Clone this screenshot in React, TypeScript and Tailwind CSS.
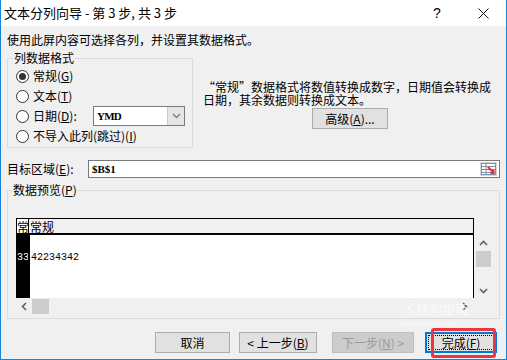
import React from "react";

const cjk = "font-['Noto_Sans_CJK_SC','Noto_Sans',sans-serif]";

function Radio({ checked, children }: { checked?: boolean; children: React.ReactNode }) {
  return (
    <div className="flex items-center gap-[4px]">
      <span className="w-[13px] h-[13px] rounded-full border border-[#333333] bg-white flex items-center justify-center shrink-0">
        {checked && <span className="w-[7px] h-[7px] rounded-full bg-[#333333]" />}
      </span>
      <span className="leading-[20px] whitespace-nowrap">{children}</span>
    </div>
  );
}

function Chevron({ dir }: { dir: "up" | "down" | "left" | "right" }) {
  const pts = {
    up: "1,6 4.5,2.5 8,6",
    down: "1,3 4.5,6.5 8,3",
    left: "6,1 2.5,4.5 6,8",
    right: "3,1 6.5,4.5 3,8",
  }[dir];
  return (
    <svg width="9" height="9" viewBox="0 0 9 9">
      <polyline points={pts} fill="none" stroke="#606060" strokeWidth="1.6" />
    </svg>
  );
}

function Btn({ children, w, kind }: { children: React.ReactNode; w: string; kind?: "disabled" | "default" }) {
  if (kind === "default") {
    return (
      <div className={`${w} h-[21px] border-2 border-[#0078d7] bg-[#e1e1e1] p-[1px] flex`}>
        <div className="flex-1 border border-dotted border-black flex items-center justify-center leading-none">{children}</div>
      </div>
    );
  }
  return (
    <div
      className={`${w} h-[21px] border flex items-center justify-center leading-none ${
        kind === "disabled" ? "border-[#bfbfbf] bg-[#cccccc] text-[#9a9a9a]" : "border-[#adadad] bg-[#e1e1e1] text-black"
      }`}
    >
      {children}
    </div>
  );
}

export default function App() {
  return (
    <div className={`relative w-[507px] h-[360px] border-x border-b border-[#1883d7] bg-[#f0f0f0] text-[12px] text-black flex flex-col ${cjk}`}>
      {/* title bar */}
      <div className="h-[26px] bg-white flex items-center shrink-0">
        <span className="pl-[3px] text-[13px] flex-1 whitespace-nowrap">文本分列向导 - 第 3 步, 共 3 步</span>
        <div className="w-[46px] h-full flex items-center justify-center text-[14px] font-['Liberation_Sans',sans-serif]">?</div>
        <div className="w-[46px] h-full flex items-center justify-center">
          <svg width="11" height="11" viewBox="0 0 11 11">
            <path d="M0.5 0.5 L10.5 10.5 M10.5 0.5 L0.5 10.5" stroke="#111" strokeWidth="1" />
          </svg>
        </div>
      </div>

      <div className="flex flex-col px-[6px]">
        <div className="mt-[6px] h-[16px] leading-[16px]">使用此屏内容可选择各列，并设置其数据格式。</div>

        {/* format group + description */}
        <div className="flex mt-[10px]">
          <div className="relative w-[186px] h-[90px] border border-[#dcdcdc] pl-[8px] pr-[7px] pt-[7px]">
            <span className="absolute left-[5px] -top-[9px] bg-[#f0f0f0] px-[1px] leading-[16px]">列数据格式</span>
            <div className="flex flex-col">
              <div className="h-[20px] flex items-center"><Radio checked>常规(<u>G</u>)</Radio></div>
              <div className="h-[20px] flex items-center"><Radio>文本(<u>T</u>)</Radio></div>
              <div className="h-[20px] flex items-center justify-between">
                <Radio>日期(<u>D</u>):</Radio>
                <div className="w-[92px] h-[20px] border border-[#7a7a7a] bg-white flex">
                  <span className="flex-1 pl-[3px] leading-[18px] text-[11px] font-bold tracking-[-0.8px] font-['Liberation_Serif',serif]">YMD</span>
                  <span className="w-[17px] bg-[#e5e5e5] border-l border-[#c8c8c8] flex items-center justify-center">
                    <svg width="9" height="6" viewBox="0 0 9 6">
                      <polyline points="1,1 4.5,4.5 8,1" fill="none" stroke="#6d6d6d" strokeWidth="1.1" />
                    </svg>
                  </span>
                </div>
              </div>
              <div className="h-[20px] flex items-center"><Radio>不导入此列(跳过)(<u>I</u>)</Radio></div>
            </div>
          </div>

          <div className="ml-[10px] flex flex-col">
            <div className="mt-[22px] leading-[13px] whitespace-nowrap">
              “常规”数据格式将数值转换成数字，日期值会转换成
              <br />
              日期，其余数据则转换成文本。
            </div>
            <div className="mt-[2px] ml-[109px]">
              <Btn w="w-[76px]">高级(<u>A</u>)...</Btn>
            </div>
          </div>
        </div>

        {/* destination */}
        <div className="flex items-center mt-[12px] h-[18px]">
          <span className="w-[81px] whitespace-nowrap">目标区域(<u>E</u>):</span>
          <div className="w-[412px] h-[18px] border border-[#7a7a7a] bg-white flex items-center">
            <span className="flex-1 pl-[3px] font-bold text-[11px] font-['Liberation_Serif',serif]">$B$1</span>
            <span className="w-[17px] h-[14px] mr-[2px] bg-[#d6d6d6] flex items-center justify-center">
              <svg width="15" height="12" viewBox="0 0 15 12">
                <rect x="0.5" y="0.5" width="14" height="11" fill="#ffffff" stroke="#7b8fa8" />
                <path d="M0.5 3.5 H14.5 M0.5 6.5 H14.5 M0.5 9.5 H14.5 M5 0.5 V11.5" stroke="#7b8fa8" strokeWidth="1" />
                <path d="M7 4 L12 9 M9.5 10 L12.5 10 L12.5 7" stroke="#e0303a" strokeWidth="2" fill="none" />
              </svg>
            </span>
          </div>
        </div>

        {/* preview group */}
        <div className="relative mt-[12px] w-[493px] h-[129px] border border-[#dcdcdc] pl-[8px] pt-[27px]">
          <span className="absolute left-[4px] -top-[9px] bg-[#f0f0f0] px-[1px] leading-[16px]">数据预览(<u>P</u>)</span>
          <div className="flex">
            <div className="flex flex-col w-[458px]">
              <div className="h-[80px] border-t border-x border-black bg-white flex flex-col overflow-hidden">
                <div className="h-[16px] bg-[#f0f0f0] border-b-2 border-black flex leading-[16px] shrink-0">
                  <div className="w-[12px] border-r border-black overflow-hidden whitespace-nowrap bg-white">常</div>
                  <div className="pl-[1px] whitespace-nowrap">常规</div>
                </div>
                <div className="flex flex-1">
                  <div className="w-[12px] bg-black text-white border-r border-black overflow-hidden font-['Liberation_Mono',monospace] text-[10px] pt-[17px] leading-[12px] whitespace-nowrap">
                    33
                  </div>
                  <div className="w-[1px] bg-black" />
                  <div className="pl-[1px] font-['Liberation_Mono',monospace] text-[10px] pt-[17px] leading-[12px]">42234342</div>
                </div>
              </div>
              <div className="h-[16px] flex items-center">
                <span className="w-[16px] flex items-center justify-center"><Chevron dir="left" /></span>
                <span className="w-[17px] h-[15px] bg-[#cdcdcd]" />
                <span className="flex-1" />
                <span className="w-[16px] flex items-center justify-center mr-[2px]"><Chevron dir="right" /></span>
              </div>
            </div>
            <div className="ml-[1px] w-[16px] mt-[18px] h-[62px] flex flex-col items-center">
              <span className="h-[15px] flex items-center justify-center"><Chevron dir="up" /></span>
              <span className="w-[15px] h-[16px] bg-[#cdcdcd]" />
              <span className="flex-1" />
              <span className="h-[15px] flex items-center justify-center"><Chevron dir="down" /></span>
            </div>
          </div>
        </div>

        {/* buttons */}
        <div className="flex mt-[13px] pl-[148px]">
          <Btn w="w-[75px]">取消</Btn>
          <div className="ml-[9px]"><Btn w="w-[78px]">&lt; 上一步(<u>B</u>)</Btn></div>
          <div className="ml-[15px]"><Btn w="w-[82px]" kind="disabled">下一步(<u>N</u>) &gt;</Btn></div>
          <div className="ml-[11px]"><Btn w="w-[72px]" kind="default">完成(<u>F</u>)</Btn></div>
        </div>
      </div>

      {/* watermark */}
      <div className="absolute left-[402px] top-[302px] text-[13px] text-white/70 leading-[14px] whitespace-nowrap">Ⓢ搜狗指南</div>
      <div className="absolute left-[400px] top-[320px] text-[7px] text-white/70 leading-[8px] whitespace-nowrap font-['Liberation_Sans',sans-serif]">zhinan.sogou.com</div>

      {/* annotation box */}
      <div className="absolute left-[430px] top-[328px] w-[65px] h-[30px] border-[3px] border-[#e8373e] rounded-[3px]" />
    </div>
  );
}
